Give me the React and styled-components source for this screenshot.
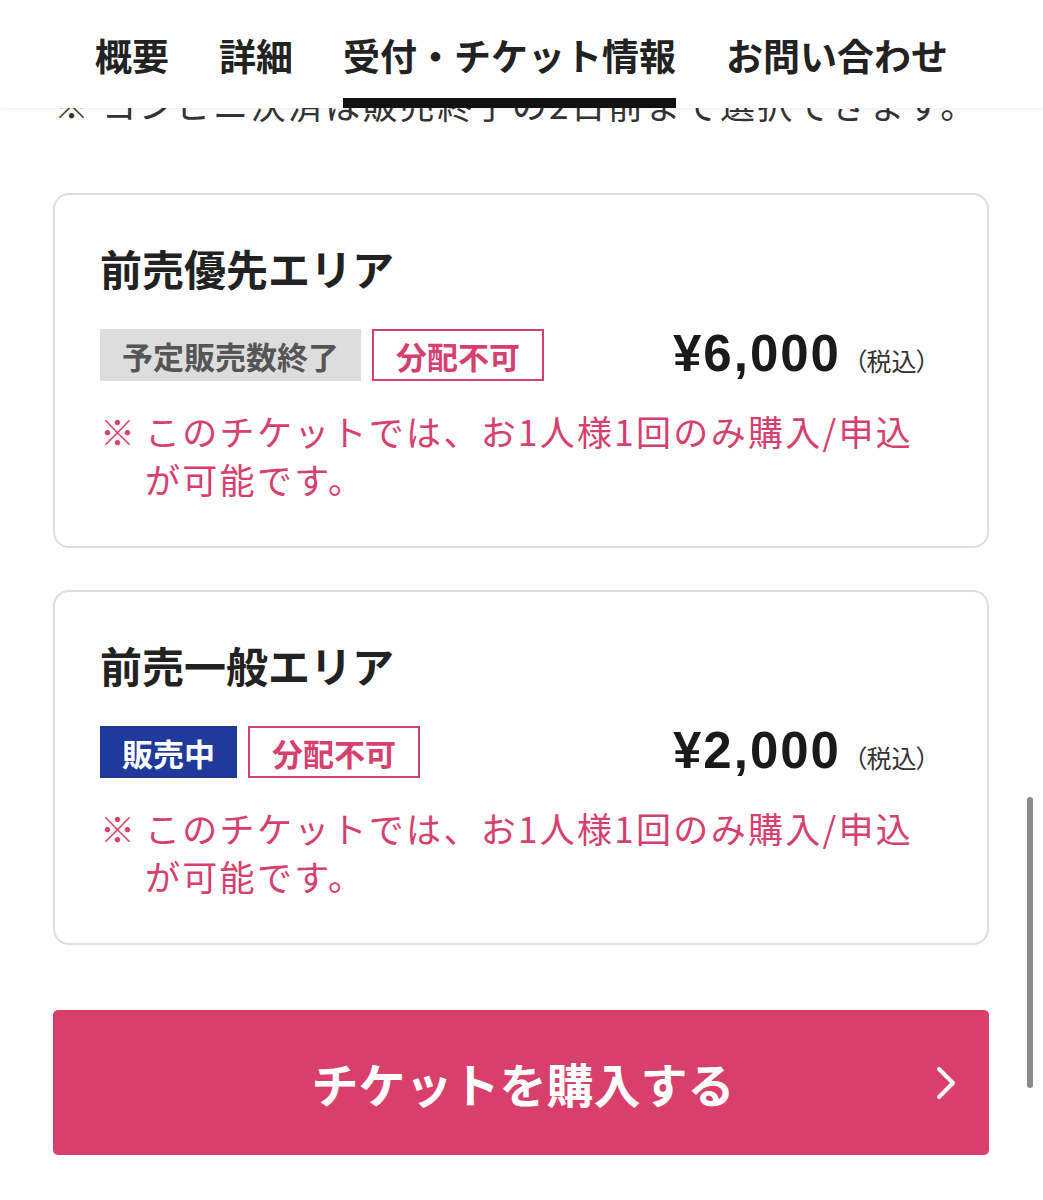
import React from "react";
import styled, { createGlobalStyle } from "styled-components";

const GlobalStyle = createGlobalStyle`
  html, body {
    margin: 0;
    padding: 0;
    background: #ffffff;
    overflow: hidden;
  }
  body {
    font-family: "Liberation Sans", "Noto Sans CJK JP", sans-serif;
    color: #222222;
  }
`;

const Page = styled("div")`
  position: relative;
  width: 1043px;
  height: 1200px;
  overflow: hidden;
`;

const Header = styled("nav")`
  position: absolute;
  top: 0;
  left: 0;
  right: 0;
  height: 108px;
  background: #ffffff;
  box-shadow: 0 2px 4px rgba(0, 0, 0, 0.06);
  display: flex;
  justify-content: center;
  gap: 50px;
  z-index: 2;
`;

const Tab = styled("div")`
  position: relative;
  display: flex;
  align-items: center;
  height: 108px;
  box-sizing: border-box;
  font-family: "Noto Sans CJK JP", sans-serif;
  font-size: 37px;
  font-weight: 700;
  color: #222222;
  line-height: 1;
  padding-top: 2px;
  &::after {
    content: "";
    display: ${(props) => (props.active ? "block" : "none")};
    position: absolute;
    left: 0;
    right: 0;
    bottom: 0;
    height: 10px;
    background: #111111;
  }
`;

const Content = styled("main")`
  padding: 80px 54px 0 53px;
`;

const TopNote = styled("p")`
  margin: 0 0 65px;
  padding-left: 1px;
  font-family: "Noto Sans CJK JP", sans-serif;
  font-size: 35px;
  letter-spacing: 2.3px;
  line-height: 48px;
  color: #333333;
  white-space: nowrap;
`;

const Card = styled("section")`
  border: 2px solid #dedede;
  border-radius: 16px;
  padding: 48px 46px 43px 45px;
  margin-bottom: 42px;
  &:last-of-type {
    margin-bottom: 0;
  }
`;

const Title = styled("h2")`
  margin: 0;
  font-family: "Noto Sans CJK JP", sans-serif;
  font-size: 42px;
  line-height: 50px;
  font-weight: 700;
  color: #222222;
`;

const Row = styled("div")`
  margin-top: 34px;
  display: flex;
  align-items: center;
`;

const Badges = styled("div")`
  display: flex;
  gap: 11px;
  flex: 1;
`;

const Badge = styled("span")`
  display: inline-flex;
  align-items: center;
  justify-content: center;
  box-sizing: border-box;
  height: 52px;
  padding: 0 22px;
  font-family: "Noto Sans CJK JP", sans-serif;
  font-size: 31px;
  font-weight: 700;
  line-height: 1;
  background: ${(props) => props.bg || "transparent"};
  color: ${(props) => props.fg};
  border: ${(props) => (props.outline ? "2px solid " + props.fg : "none")};
`;

const Price = styled("div")`
  display: flex;
  align-items: baseline;
  padding-right: 12px;
  margin-top: -3px;
`;

const Amount = styled("span")`
  font-family: "Liberation Sans", sans-serif;
  font-size: 51px;
  font-weight: 700;
  color: #1a1a1a;
  letter-spacing: 2px;
`;

const Tax = styled("span")`
  margin-left: 13px;
  font-family: "Noto Sans CJK JP", sans-serif;
  font-size: 25px;
  color: #333333;
  font-feature-settings: "palt";
`;

const Note = styled("div")`
  margin-top: 24px;
  display: flex;
  font-family: "Noto Sans CJK JP", sans-serif;
  font-size: 35px;
  line-height: 48px;
  color: #d63f6e;
  letter-spacing: 2.3px;
`;

const Mark = styled("span")`
  flex: none;
  width: 45px;
`;

const NoteText = styled("span")`
  white-space: nowrap;
`;

const BuyButton = styled("button")`
  margin-top: 65px;
  width: 100%;
  height: 145px;
  position: relative;
  display: flex;
  align-items: center;
  justify-content: center;
  border: none;
  border-radius: 5px;
  background: #d93f6b;
  color: #ffffff;
  font-family: "Noto Sans CJK JP", sans-serif;
  font-size: 47px;
  font-weight: 700;
  padding: 0 0 0 4px;
  cursor: pointer;
`;

const Chevron = styled("svg")`
  position: absolute;
  right: 32px;
  top: 50%;
  transform: translateY(-50%);
`;

const ScrollThumb = styled("div")`
  position: absolute;
  right: 10px;
  top: 797px;
  width: 6px;
  height: 291px;
  border-radius: 3px;
  background: #8a8a8a;
  z-index: 3;
`;

const tabs = [
  { label: "概要" },
  { label: "詳細" },
  { label: "受付・チケット情報", active: true },
  { label: "お問い合わせ" },
];

const tickets = [
  {
    name: "前売優先エリア",
    status: { label: "予定販売数終了", bg: "#dddddd", fg: "#555555" },
    price: "¥6,000",
  },
  {
    name: "前売一般エリア",
    status: { label: "販売中", bg: "#1f3a9b", fg: "#ffffff" },
    price: "¥2,000",
  },
];

export default function App() {
  return (
    <Page>
      <GlobalStyle />
      <Header>
        {tabs.map((tab) => (
          <Tab key={tab.label} active={tab.active}>
            {tab.label}
          </Tab>
        ))}
      </Header>
      <Content>
        <TopNote>※ コンビニ決済は販売終了の2日前まで選択できます。</TopNote>
        {tickets.map((ticket) => (
          <Card key={ticket.name}>
            <Title>{ticket.name}</Title>
            <Row>
              <Badges>
                <Badge bg={ticket.status.bg} fg={ticket.status.fg}>
                  {ticket.status.label}
                </Badge>
                <Badge outline fg="#d63f6e">
                  分配不可
                </Badge>
              </Badges>
              <Price>
                <Amount>{ticket.price}</Amount>
                <Tax>（税込）</Tax>
              </Price>
            </Row>
            <Note>
              <Mark>※</Mark>
              <NoteText>
                このチケットでは、お1人様1回のみ購入/申込
                <br />
                が可能です。
              </NoteText>
            </Note>
          </Card>
        ))}
        <BuyButton>
          チケットを購入する
          <Chevron width="22" height="34" viewBox="0 0 22 34">
            <path
              d="M4 3 L18 17 L4 31"
              fill="none"
              stroke="#ffffff"
              strokeWidth="4"
              strokeLinecap="round"
              strokeLinejoin="round"
            />
          </Chevron>
        </BuyButton>
      </Content>
      <ScrollThumb />
    </Page>
  );
}
